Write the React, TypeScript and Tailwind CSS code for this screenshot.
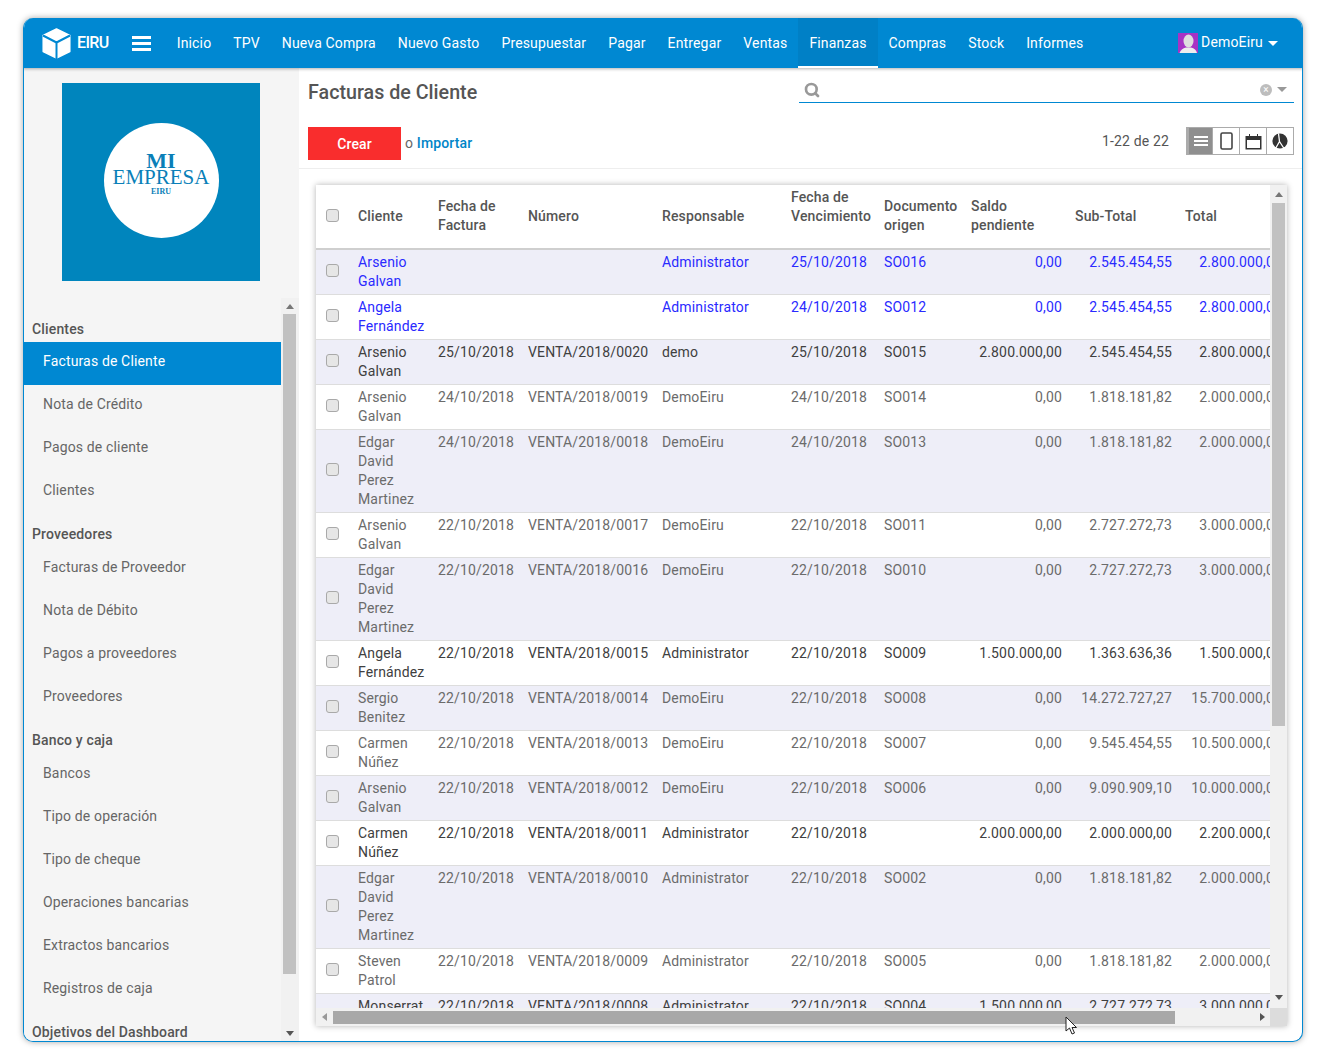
import React from 'react';
import { Search } from 'lucide-react';

const navItems = ['Inicio', 'TPV', 'Nueva Compra', 'Nuevo Gasto', 'Presupuestar', 'Pagar', 'Entregar', 'Ventas', 'Finanzas', 'Compras', 'Stock', 'Informes'];

const sideMenu = [
  { title: 'Clientes', items: ['Facturas de Cliente', 'Nota de Crédito', 'Pagos de cliente', 'Clientes'] },
  { title: 'Proveedores', items: ['Facturas de Proveedor', 'Nota de Débito', 'Pagos a proveedores', 'Proveedores'] },
  { title: 'Banco y caja', items: ['Bancos', 'Tipo de operación', 'Tipo de cheque', 'Operaciones bancarias', 'Extractos bancarios', 'Registros de caja'] },
  { title: 'Objetivos del Dashboard', items: [] as string[] }
];

// cliente, fecha, numero, responsable, vencimiento, origen, saldo, subtotal, total, tono
const rows: [string, string, string, string, string, string, string, string, string, 'blue' | 'dark' | 'grey'][] = [
  ['Arsenio Galvan', '', '', 'Administrator', '25/10/2018', 'SO016', '0,00', '2.545.454,55', '2.800.000,00', 'blue'],
  ['Angela Fernández', '', '', 'Administrator', '24/10/2018', 'SO012', '0,00', '2.545.454,55', '2.800.000,00', 'blue'],
  ['Arsenio Galvan', '25/10/2018', 'VENTA/2018/0020', 'demo', '25/10/2018', 'SO015', '2.800.000,00', '2.545.454,55', '2.800.000,00', 'dark'],
  ['Arsenio Galvan', '24/10/2018', 'VENTA/2018/0019', 'DemoEiru', '24/10/2018', 'SO014', '0,00', '1.818.181,82', '2.000.000,00', 'grey'],
  ['Edgar David Perez Martinez', '24/10/2018', 'VENTA/2018/0018', 'DemoEiru', '24/10/2018', 'SO013', '0,00', '1.818.181,82', '2.000.000,00', 'grey'],
  ['Arsenio Galvan', '22/10/2018', 'VENTA/2018/0017', 'DemoEiru', '22/10/2018', 'SO011', '0,00', '2.727.272,73', '3.000.000,00', 'grey'],
  ['Edgar David Perez Martinez', '22/10/2018', 'VENTA/2018/0016', 'DemoEiru', '22/10/2018', 'SO010', '0,00', '2.727.272,73', '3.000.000,00', 'grey'],
  ['Angela Fernández', '22/10/2018', 'VENTA/2018/0015', 'Administrator', '22/10/2018', 'SO009', '1.500.000,00', '1.363.636,36', '1.500.000,00', 'dark'],
  ['Sergio Benitez', '22/10/2018', 'VENTA/2018/0014', 'DemoEiru', '22/10/2018', 'SO008', '0,00', '14.272.727,27', '15.700.000,00', 'grey'],
  ['Carmen Núñez', '22/10/2018', 'VENTA/2018/0013', 'DemoEiru', '22/10/2018', 'SO007', '0,00', '9.545.454,55', '10.500.000,00', 'grey'],
  ['Arsenio Galvan', '22/10/2018', 'VENTA/2018/0012', 'DemoEiru', '22/10/2018', 'SO006', '0,00', '9.090.909,10', '10.000.000,00', 'grey'],
  ['Carmen Núñez', '22/10/2018', 'VENTA/2018/0011', 'Administrator', '22/10/2018', '', '2.000.000,00', '2.000.000,00', '2.200.000,00', 'dark'],
  ['Edgar David Perez Martinez', '22/10/2018', 'VENTA/2018/0010', 'Administrator', '22/10/2018', 'SO002', '0,00', '1.818.181,82', '2.000.000,00', 'grey'],
  ['Steven Patrol', '22/10/2018', 'VENTA/2018/0009', 'Administrator', '22/10/2018', 'SO005', '0,00', '1.818.181,82', '2.000.000,00', 'grey'],
  ['Monserrat Ruiz', '22/10/2018', 'VENTA/2018/0008', 'Administrator', '22/10/2018', 'SO004', '1.500.000,00', '2.727.272,73', '3.000.000,00', 'dark']
];

const headers = ['Cliente', 'Fecha de Factura', 'Número', 'Responsable', 'Fecha de Vencimiento', 'Documento origen', 'Saldo pendiente'];
const twoLineHeaders = ['Fecha de Factura', 'Documento origen', 'Saldo pendiente'];

const tone = { blue: 'text-[#2a2aff]', dark: 'text-[#404040]', grey: 'text-[#6b6b6b]' };

function Check() {
  return <span className="block w-[13px] h-[13px] rounded-[3px] border border-[#a9a9a9] bg-[#e6e6e6] ml-[10px]" />;
}

function Cube() {
  return <svg width="29" height="31" viewBox="0 0 29 31">
      <path d="M14.5 1 L27.8 7.5 V23.5 L14.5 30 L1.2 23.5 V7.5 Z" fill="#fff" stroke="#fff" strokeWidth="1.5" strokeLinejoin="round" />
      <path d="M1 7.5 L14.5 14.5 L28 7.5 M14.5 14.5 V31" fill="none" stroke="#0088d2" strokeWidth="2" />
    </svg>;
}

function Burger() {
  return <svg width="19" height="15" viewBox="0 0 19 15" fill="#fff">
      <rect width="19" height="3" />
      <rect y="6" width="19" height="3" />
      <rect y="12" width="19" height="3" />
    </svg>;
}

function Avatar() {
  return <svg width="20" height="20" viewBox="0 0 20 20">
      <rect width="20" height="20" fill="#a733c4" />
      <ellipse cx="10.5" cy="8" rx="5" ry="6.5" fill="#dedede" />
      <path d="M1.5 20 Q3 15.5 8 14.5 H13 Q18 15.5 19 20 Z" fill="#eeeeee" />
    </svg>;
}

function Caret({ className }: { className: string }) {
  return <span className={`block w-0 h-0 border-x-[5px] border-x-transparent border-t-[5px] ${className}`} />;
}

function Arrow({ dir }: { dir: 'up' | 'down' | 'left' | 'right' }) {
  const shape = {
    up: 'border-x-[4px] border-x-transparent border-b-[5px] border-b-[#777]',
    down: 'border-x-[4px] border-x-transparent border-t-[5px] border-t-[#555]',
    left: 'border-y-[4px] border-y-transparent border-r-[5px] border-r-[#999]',
    right: 'border-y-[4px] border-y-transparent border-l-[5px] border-l-[#555]'
  }[dir];
  return <span className={`block w-0 h-0 ${shape}`} />;
}

function Sidebar() {
  return <aside className="w-[275px] h-full flex bg-[#f5f5f5] overflow-hidden shrink-0">
      <div className="w-[257px] h-full overflow-hidden pt-[15px]">
        <div className="flex justify-center w-[198px] h-[198px] ml-[38px] pt-[40px] bg-[#0085bd]">
          <div className="w-[115px] h-[115px] rounded-full bg-white flex flex-col items-center pt-[29px] text-[#0a7fb8] tracking-normal font-['Liberation_Serif',serif]">
            <span className="text-[22px] leading-[17px] font-bold">MI</span>
            <span className="text-[21px] leading-[17px]">EMPRESA</span>
            <span className="text-[8px] leading-[12px] font-bold">EIRU</span>
          </div>
        </div>
        <div className="mt-[27px]">
          {sideMenu.map((group, i) => <div key={group.title}>
              <div className={`h-[34px] pl-2 text-sm leading-[20px] font-medium text-[#555] ${i === 0 ? 'pt-[11px]' : 'pt-[10px]'}`}>{group.title}</div>
              {group.items.map(item => <div key={item} className={`h-[43px] flex items-center pl-[19px] pb-[6px] text-sm ${item === 'Facturas de Cliente' ? 'bg-[#0088d2] text-white' : 'text-[#666]'}`}>
                  {item}
                </div>)}
            </div>)}
        </div>
      </div>
      <div className="w-[18px] h-full flex flex-col items-center">
        <div className="h-[230px] w-full" />
        <div className="w-full flex-1 bg-[#f1f1f1] flex flex-col items-center pr-px">
          <div className="h-[16px] flex items-center"><Arrow dir="up" /></div>
          <div className="w-[13px] h-[660px] bg-[#c1c1c1]" />
          <div className="flex-1 flex items-end pb-[5px]"><Arrow dir="down" /></div>
        </div>
      </div>
    </aside>;
}

function ViewSwitcher() {
  return <div className="flex h-[28px] border border-[#ababab]">
      <div className="w-[25px] bg-[#8f8f8f] flex items-center justify-center border-l-2 border-[#ababab]">
        <svg width="14" height="12" viewBox="0 0 14 12" fill="#fff"><rect y="1" width="14" height="2" /><rect y="5" width="14" height="2" /><rect y="9" width="14" height="2" /></svg>
      </div>
      <div className="w-[27px] flex items-center justify-center border-l border-[#ababab]">
        <svg width="13" height="18" viewBox="0 0 13 18" fill="none" stroke="#444" strokeWidth="1.6"><rect x="1" y="1" width="11" height="16" rx="1.5" /></svg>
      </div>
      <div className="w-[27px] flex items-center justify-center border-l border-[#ababab]">
        <svg width="17" height="17" viewBox="0 0 17 17" fill="#333"><path d="M0.5 3H4V1H5V3H12V1H13V3H16.5V16.5H0.5ZM2 7V15H15V7Z" /></svg>
      </div>
      <div className="w-[27px] flex items-center justify-center border-l border-[#ababab]">
        <svg width="16" height="16" viewBox="0 0 16 16">
          <circle cx="8" cy="8" r="7.6" fill="#333" />
          <path d="M7.5 8.5L3.5 15.5M7.5 8.5L12 15.5M7.5 8.5L6.5 0.5" fill="none" stroke="#fff" strokeWidth="1.3" />
        </svg>
      </div>
    </div>;
}

function InvoiceTable() {
  return <div className="ml-[17px] mt-4 w-[971px] h-[841px] bg-white shadow-[0_0_6px_rgba(0,0,0,0.3)] flex flex-col">
      <div className="flex h-[823px]">
        <div className="w-[954px] overflow-hidden">
          <table className="w-[973px] table-fixed border-separate border-spacing-0 text-sm leading-[19px]">
            <colgroup>
              <col className="w-[35px]" /><col className="w-[80px]" /><col className="w-[90px]" /><col className="w-[134px]" /><col className="w-[129px]" /><col className="w-[93px]" /><col className="w-[87px]" /><col className="w-[105px]" /><col className="w-[110px]" /><col className="w-[110px]" />
            </colgroup>
            <thead>
              <tr className="h-[65px] text-left text-[#555]">
                <th className="border-b-2 border-[#cfcfcf] pb-[3px] font-medium"><Check /></th>
                {headers.map(head => <th key={head} className={`border-b-2 border-[#cfcfcf] px-[7px] font-medium ${twoLineHeaders.includes(head) ? 'pb-[2px]' : ''}`}>
                    {head}{head === 'Fecha de Vencimiento' && <><br />&nbsp;</>}
                  </th>)}
                <th className="border-b-2 border-[#cfcfcf] pl-[6px] font-medium">Sub-Total</th>
                <th className="border-b-2 border-[#cfcfcf] pl-[6px] font-medium">Total</th>
              </tr>
            </thead>
            <tbody>
              {rows.map((row, i) => <tr key={i} className={`${i % 2 === 0 ? 'bg-[#eeeef8]' : 'bg-white'} ${tone[row[9]]}`}>
                  <td className="border-b border-[#dddddd] align-middle pb-[4px]"><Check /></td>
                  {row.slice(0, 6).map((cell, c) => <td key={c} className={`border-b border-[#dddddd] align-top py-[3px] ${c === 2 ? 'pl-[7px] pr-0' : 'px-[7px]'}`}>{cell}</td>)}
                  {row.slice(6, 9).map((cell, c) => <td key={c} className="border-b border-[#dddddd] align-top py-[3px] px-[7px] text-right">{cell}</td>)}
                </tr>)}
            </tbody>
          </table>
        </div>
        <div className="w-[17px] bg-[#f1f1f1] flex flex-col items-center">
          <div className="h-[18px] flex items-center"><Arrow dir="up" /></div>
          <div className="w-[13px] h-[523px] bg-[#c1c1c1]" />
          <div className="flex-1 flex items-end pb-[8px]"><Arrow dir="down" /></div>
        </div>
      </div>
      <div className="flex flex-1 bg-[#f1f1f1]">
        <div className="w-[954px] flex items-center pl-[6px]">
          <Arrow dir="left" />
          <div className="ml-[6px] w-[842px] h-[13px] bg-[#a8a8a8]" />
          <span className="ml-[85px]"><Arrow dir="right" /></span>
        </div>
        <div className="w-[17px] bg-[#dcdcdc]" />
      </div>
    </div>;
}

export default function App() {
  return <div className="relative w-[1326px] h-[1060px] pt-[18px] pl-[23px] bg-white overflow-hidden tracking-[0.15px] font-['Roboto',sans-serif]">
      <div className="w-[1280px] h-[1024px] rounded-[10px] border-x border-b border-[#0088d2] shadow-[0_0_6px_rgba(0,0,0,0.35)] bg-white flex flex-col overflow-hidden">
        {/* Top bar */}
        <header className="-mx-px h-[50px] shrink-0 bg-[#0088d2] flex items-center text-white text-sm z-10 shadow-[0_1px_3px_rgba(0,0,0,0.3)]">
          <div className="ml-[19px]"><Cube /></div>
          <span className="ml-[6px] text-base font-medium tracking-[-0.6px]">EIRU</span>
          <div className="ml-[23px]"><Burger /></div>
          <nav className="ml-[15px] flex h-full">
            {navItems.map(item => <div key={item} className={`h-full px-[11px] flex items-center ${item === 'Finanzas' ? 'bg-[#0080c6] border-b-2 border-white pt-[2px]' : ''}`}>{item}</div>)}
          </nav>
          <div className="ml-auto mr-[25px] flex items-center">
            <Avatar />
            <span className="ml-[3px] mb-[2px]">DemoEiru</span>
            <Caret className="ml-[5px] border-t-white" />
          </div>
        </header>

        <div className="flex flex-1 min-h-0">
          <Sidebar />
          <main className="flex-1 min-w-0">
            {/* Control panel */}
            <div className="h-[101px] border-b border-[#eeeeee] pl-[9px] pr-[8px] pt-[9px]">
              <div className="flex items-start justify-between h-[50px]">
                <h1 className="text-[19.7px] leading-[30px] pt-px font-medium text-[#555] tracking-normal">Facturas de Cliente</h1>
                <div className="w-[495px] h-[26px] border-b border-[#0088d2] flex items-center pl-[5px] pr-[7px]">
                  <Search size={16} strokeWidth={4} className="text-[#999]" />
                  <span className="ml-auto w-[12px] h-[12px] rounded-full bg-[#bdbdbd] text-white text-[10px] leading-[12px] text-center">×</span>
                  <Caret className="ml-[5px] border-t-[#999]" />
                </div>
              </div>
              <div className="flex items-start">
                <button className="w-[93px] h-[33px] bg-[#f92d2d] text-white text-sm font-medium">Crear</button>
                <span className="ml-1 mt-[6px] text-sm text-[#666]">o <span className="font-medium text-[#0085c8]">Importar</span></span>
                <span className="ml-auto mr-[17px] mt-[4px] text-sm text-[#555]">1-22 de 22</span>
                <ViewSwitcher />
              </div>
            </div>
            <InvoiceTable />
          </main>
        </div>
      </div>

      {/* Mouse pointer */}
      <svg className="absolute left-[1065px] top-[1016px]" width="13" height="20" viewBox="0 0 13 20" fill="#fff" stroke="#222" strokeWidth="1">
        <path d="M1 1V15L4.5 12L7 18L9.5 17L7 11.5H11.5Z" />
      </svg>
    </div>;
}
